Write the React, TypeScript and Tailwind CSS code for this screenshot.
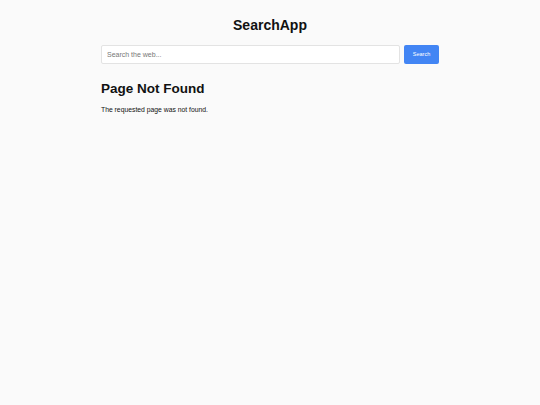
import React from "react";

export default function App() {
  return (
    <div className="min-h-[405px] w-full bg-[#fafafa] text-[#111] [font-family:'Liberation_Sans',Arial,sans-serif]">
      <div className="mx-auto w-[338px] pt-[15px]">
        <h1 className="text-center text-[14px] font-bold leading-[20px]">SearchApp</h1>
        <form className="mt-[10px] flex gap-[4px]" onSubmit={(e) => e.preventDefault()}>
          <input
            type="text"
            placeholder="Search the web..."
            className="h-[19px] flex-1 rounded-[2px] border border-[#e3e3e3] bg-white px-[5px] text-[7px] text-[#333] outline-none placeholder:text-[#777]"
          />
          <button
            type="submit"
            className="h-[19px] w-[35px] rounded-[2px] bg-[#4285f4] text-[5.5px] text-white"
          >
            Search
          </button>
        </form>
        <h2 className="mt-[16px] text-[13.5px] font-bold leading-[18px]">Page Not Found</h2>
        <p className="mt-[7px] text-[6.8px] leading-[10px] text-[#111]">The requested page was not found.</p>
      </div>
    </div>
  );
}
